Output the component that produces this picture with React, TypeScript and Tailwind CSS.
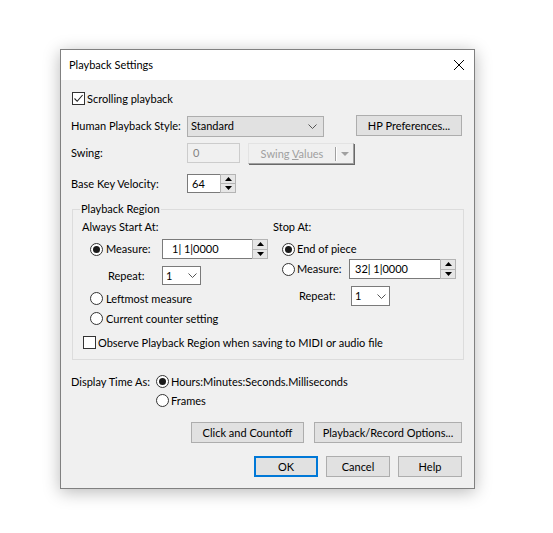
import React from "react";

function Check({ checked }: { checked?: boolean }) {
  return (
    <span className="w-[13px] h-[13px] border border-[#333333] bg-white flex items-center justify-center shrink-0">
      {checked && (
        <svg width="11" height="11" viewBox="0 0 11 11">
          <path d="M1.5 5.5 L4.2 8.3 L9.6 2" fill="none" stroke="#222" strokeWidth="1.1" />
        </svg>
      )}
    </span>
  );
}

function Radio({ on }: { on?: boolean }) {
  return (
    <span className="w-[13px] h-[13px] rounded-full border border-[#333333] bg-white flex items-center justify-center shrink-0">
      {on && <span className="w-[7px] h-[7px] rounded-full bg-[#1a1a1a]" />}
    </span>
  );
}

function Chevron() {
  return (
    <svg width="9" height="5" viewBox="0 0 9 5">
      <path d="M0.5 0.5 L4.5 4.5 L8.5 0.5" fill="none" stroke="#555" strokeWidth="1" />
    </svg>
  );
}

function Spin() {
  return (
    <div className="w-[16px] h-full border border-[#b4b4b4] bg-[#e6e6e6] flex flex-col shrink-0">
      <div className="flex-1 flex items-center justify-center border-b border-[#b4b4b4]">
        <svg width="7" height="4" viewBox="0 0 7 4">
          <path d="M3.5 0 L7 4 L0 4 Z" fill="#000" />
        </svg>
      </div>
      <div className="flex-1 flex items-center justify-center">
        <svg width="7" height="4" viewBox="0 0 7 4">
          <path d="M0 0 L7 0 L3.5 4 Z" fill="#000" />
        </svg>
      </div>
    </div>
  );
}

export default function App() {
  return (
    <div className="w-[553px] h-[533px] bg-white pt-[49px] pl-[60px] font-[Lato,sans-serif] text-[11px] leading-[14px] text-black">
      <div className="w-[415px] h-[440px] border border-[#808080] bg-[#f0f0f0] flex flex-col shadow-[0_3px_16px_rgba(0,0,0,0.28)]">
        {/* title bar */}
        <div className="h-[30px] bg-white flex items-center justify-between pl-[8px] pr-[10px] shrink-0">
          <span>Playback Settings</span>
          <svg width="10" height="10" viewBox="0 0 10 10">
            <path d="M0 0 L10 10 M10 0 L0 10" stroke="#000" strokeWidth="1" />
          </svg>
        </div>

        <div className="flex-1 pl-[10px] pr-[12px] flex flex-col">
          {/* scrolling playback */}
          <div className="mt-[12px] ml-[1px] h-[13px] flex items-center gap-[2px]">
            <Check checked />
            <span>Scrolling playback</span>
          </div>

          {/* human playback style */}
          <div className="mt-[10px] h-[21px] flex items-center">
            <span className="w-[116px] whitespace-nowrap">Human Playback Style:</span>
            <div className="w-[137px] h-[21px] mt-[1px] bg-[#e1e1e1] border border-[#adadad] flex items-center justify-between pl-[3px] pr-[6px]">
              <span>Standard</span>
              <Chevron />
            </div>
            <div className="ml-auto w-[106px] h-[21px] bg-[#e1e1e1] border border-[#adadad] flex items-center justify-center">
              HP Preferences...
            </div>
          </div>

          {/* swing */}
          <div className="mt-[7px] h-[22px] flex items-start">
            <span className="w-[116px] h-[20px] flex items-center">Swing:</span>
            <div className="w-[53px] h-[20px] border border-[#cccccc] bg-[#f0f0f0] text-[#838383] pl-[5px] flex items-center">
              0
            </div>
            <div className="ml-[8px] w-[106px] h-[21px] bg-[#f0f0f0] border border-t-[#e3e3e3] border-l-[#e3e3e3] border-r-[#a0a0a0] border-b-[#a0a0a0] shadow-[1px_1px_0_#696969] flex items-center">
              <span className="flex-1 text-center text-[#a0a0a0]">
                Swing <span className="underline">V</span>alues
              </span>
              <span className="w-px h-[14px] bg-[#a0a0a0]" />
              <span className="w-px h-[14px] bg-white" />
              <span className="w-[16px] flex items-center justify-center">
                <svg width="8" height="4" viewBox="0 0 8 4">
                  <path d="M0 0 L8 0 L4 4 Z" fill="#a0a0a0" />
                </svg>
              </span>
            </div>
          </div>

          {/* base key velocity */}
          <div className="mt-[9px] h-[19px] flex items-center">
            <span className="w-[116px]">Base Key Velocity:</span>
            <div className="flex h-[19px]">
              <div className="w-[33px] bg-white border border-r-0 border-[#7a7a7a] pl-[4px] flex items-center">64</div>
              <Spin />
            </div>
          </div>

          {/* playback region */}
          <fieldset className="mt-[9px] ml-[1px] w-[392px] border border-[#dcdcdc] pl-[9px] pt-[4px] pb-[10px]">
            <legend className="-ml-[2px] px-[1px] leading-[14px]">Playback Region</legend>
            <div className="flex">
              <div className="w-[191px] flex flex-col">
                <div className="h-[14px]">Always Start At:</div>
                <div className="mt-[5px] h-[20px] flex items-center">
                  <div className="ml-[8px] w-[72px] flex items-center gap-[3px]">
                    <Radio on />
                    <span>Measure:</span>
                  </div>
                  <div className="flex h-[20px]">
                    <div className="w-[90px] bg-white border border-r-0 border-[#7a7a7a] pl-[9px] flex items-center whitespace-pre">
                      1| 1|0000
                    </div>
                    <Spin />
                  </div>
                </div>
                <div className="mt-[7px] h-[19px] flex items-center">
                  <span className="ml-[26px] w-[54px]">Repeat:</span>
                  <div className="w-[39px] h-[19px] bg-white border border-[#7a7a7a] flex items-center justify-between pl-[3px] pr-[3px]">
                    <span>1</span>
                    <Chevron />
                  </div>
                </div>
                <div className="mt-[7px] ml-[8px] h-[13px] flex items-center gap-[3px]">
                  <Radio />
                  <span>Leftmost measure</span>
                </div>
                <div className="mt-[7px] ml-[8px] h-[13px] flex items-center gap-[3px]">
                  <Radio />
                  <span>Current counter setting</span>
                </div>
              </div>

              <div className="flex flex-col">
                <div className="h-[14px]">Stop At:</div>
                <div className="mt-[5px] ml-[9px] h-[20px] flex items-center gap-[2px]">
                  <Radio on />
                  <span>End of piece</span>
                </div>
                <div className="h-[20px] flex items-center">
                  <div className="ml-[9px] w-[67px] flex items-center gap-[2px]">
                    <Radio />
                    <span>Measure:</span>
                  </div>
                  <div className="flex h-[20px]">
                    <div className="w-[91px] bg-white border border-r-0 border-[#7a7a7a] pl-[5px] flex items-center whitespace-pre">
                      32| 1|0000
                    </div>
                    <Spin />
                  </div>
                </div>
                <div className="mt-[7px] h-[20px] flex items-center">
                  <span className="ml-[26px] w-[52px]">Repeat:</span>
                  <div className="w-[39px] h-[20px] bg-white border border-[#7a7a7a] flex items-center justify-between pl-[3px] pr-[3px]">
                    <span>1</span>
                    <Chevron />
                  </div>
                </div>
              </div>
            </div>
            <div className="mt-[11px] ml-[1px] h-[13px] flex items-center gap-[2px]">
              <Check />
              <span>Observe Playback Region when saving to MIDI or audio file</span>
            </div>
          </fieldset>

          {/* display time as */}
          <div className="mt-[15px] flex">
            <div className="w-[85px] h-[13px] flex items-center whitespace-nowrap">Display Time As:</div>
            <div className="flex flex-col gap-[6px]">
              <div className="h-[13px] flex items-center gap-[2px]">
                <Radio on />
                <span>Hours:Minutes:Seconds.Milliseconds</span>
              </div>
              <div className="h-[13px] flex items-center gap-[2px]">
                <Radio />
                <span>Frames</span>
              </div>
            </div>
          </div>

          {/* option buttons */}
          <div className="mt-[15px] flex justify-end gap-[10px]">
            <div className="w-[113px] h-[21px] bg-[#e1e1e1] border border-[#adadad] flex items-center justify-center">
              Click and Countoff
            </div>
            <div className="w-[148px] h-[21px] bg-[#e1e1e1] border border-[#adadad] flex items-center justify-center">
              Playback/Record Options...
            </div>
          </div>

          {/* dialog buttons */}
          <div className="mt-[13px] flex justify-end gap-[8px]">
            <div className="w-[64px] h-[21px] bg-[#e1e1e1] border-2 border-[#0078d7] flex items-center justify-center">
              OK
            </div>
            <div className="w-[64px] h-[21px] bg-[#e1e1e1] border border-[#adadad] flex items-center justify-center">
              Cancel
            </div>
            <div className="w-[64px] h-[21px] bg-[#e1e1e1] border border-[#adadad] flex items-center justify-center">
              Help
            </div>
          </div>
        </div>
      </div>
    </div>
  );
}
